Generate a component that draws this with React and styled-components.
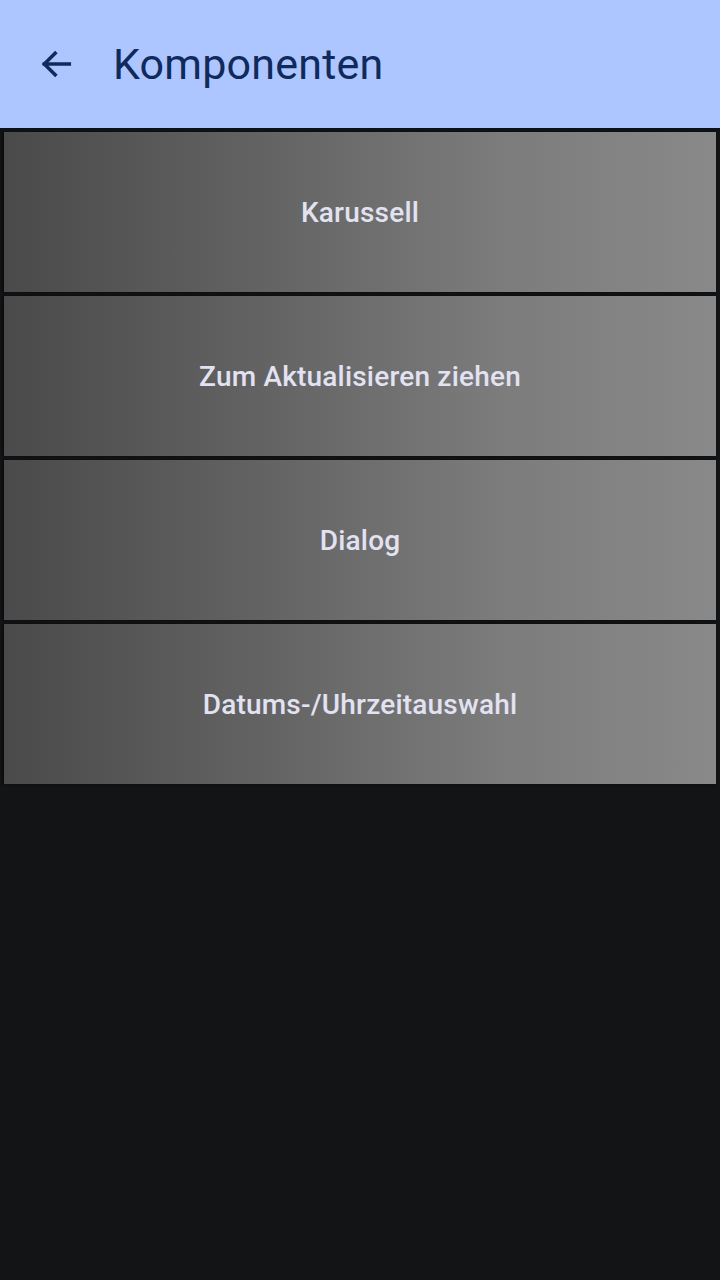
import styled, { createGlobalStyle } from 'styled-components';

const GlobalStyle = createGlobalStyle`
  html, body {
    margin: 0;
    padding: 0;
    background: #131416;
    font-family: Roboto, "Noto Sans", sans-serif;
  }
`;

const Screen = styled.div`
  width: 720px;
  min-height: 1280px;
  background: #131416;
`;

const AppBar = styled.header`
  height: 128px;
  background: #adc6ff;
  display: flex;
  align-items: center;
  padding-left: 34px;
  gap: 35px;
  box-sizing: border-box;
  box-shadow: 0 1px 2px rgba(8, 18, 40, 0.9);
`;

const BackButton = styled.button`
  width: 44px;
  height: 44px;
  padding: 0;
  border: 0;
  background: transparent;
  display: flex;
  align-items: center;
  justify-content: center;
  color: #112a5c;
`;

const Title = styled.h1`
  margin: 0;
  font-size: 43px;
  font-weight: 400;
  color: #112a5c;
  letter-spacing: 0.2px;
`;

const List = styled.div`
  display: flex;
  flex-direction: column;
  gap: 4px;
  padding: 4px 4px 0 4px;
`;

const Item = styled.button`
  height: 160px;
  border: 0;
  padding: 0;
  background: linear-gradient(90deg, #4a4a4a 0%, #626262 35%, #7c7c7c 70%, #898989 100%);
  box-shadow: -2px 0 3px rgba(0, 0, 0, 0.5);
  color: #e2e2f2;
  font-family: Roboto, "Noto Sans", sans-serif;
  font-size: 28px;
  font-weight: 500;
  letter-spacing: 0.2px;
  display: flex;
  align-items: center;
  justify-content: center;
`;

const items = ['Karussell', 'Zum Aktualisieren ziehen', 'Dialog', 'Datums-/Uhrzeitauswahl'];

const App = () => (
  <>
    <GlobalStyle />
    <Screen>
      <AppBar>
        <BackButton aria-label="Zurück">
          <svg width="40" height="40" viewBox="0 0 24 24" fill="none" stroke="currentColor" strokeWidth="2.1" strokeLinecap="square">
            <path d="M20 12H5" />
            <path d="M11.5 5.5L5 12l6.5 6.5" />
          </svg>
        </BackButton>
        <Title>Komponenten</Title>
      </AppBar>
      <List>
        {items.map((label) => (
          <Item key={label}>{label}</Item>
        ))}
      </List>
    </Screen>
  </>
);

export default App;
